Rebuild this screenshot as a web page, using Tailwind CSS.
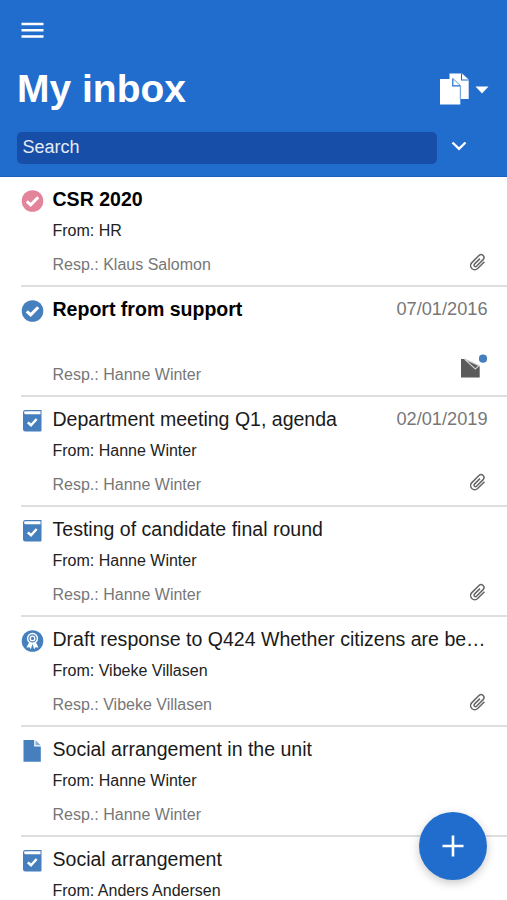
<!DOCTYPE html>
<html lang="en">
<head>
<meta charset="utf-8">
<title>My inbox</title>
<script src="https://cdn.jsdelivr.net/npm/@tailwindcss/browser@4"></script>
</head>
<body class="relative h-[900px] w-[507px] overflow-hidden bg-white font-['Liberation_Sans',Arial,sans-serif] text-black">
<svg class="hidden">
  <symbol id="task" viewBox="0 0 22 22"><circle cx="11" cy="11" r="10.8" fill="currentColor"/><path d="M5.3 11.3 9.200 14.900l7.500-7.700" fill="none" stroke="#fff" stroke-width="3"/></symbol>
  <symbol id="book" viewBox="0 0 22 22"><path d="M3.500 0H20v20.500a1 1 0 0 1-1 1H4a2.500 2.500 0 0 1-2.500-2.500V2.200A2.200 2.200 0 0 1 3.500 0Z" fill="currentColor"/><path d="M4 1.300h15v2.900H4a1.450 1.450 0 0 1 0-2.900Z" fill="#fff"/><path d="m6.300 12.400 3.200 2.900 5.700-6.300" fill="none" stroke="#fff" stroke-width="2.500"/></symbol>
  <symbol id="award" viewBox="0 0 22 22"><circle cx="11" cy="11" r="10.800" fill="currentColor"/><path d="m8 11.500-3 6.100 2.900-.3 1.500 2L11 14l1.600 5.300 1.500-2 2.900.3-3-6.100Z" fill="#fff"/><circle cx="11" cy="8.400" r="4.900" fill="currentColor" stroke="#fff" stroke-width="1.400"/><circle cx="11" cy="8.400" r="2.300" fill="none" stroke="#fff" stroke-width="1.300"/></symbol>
  <symbol id="doc" viewBox="0 0 22 22"><path d="M2 0h10.700v6.500h6.600v15.200H2Z" fill="currentColor"/><path d="m14 .3 5.200 5H14Z" fill="currentColor" opacity=".65"/></symbol>
  <symbol id="clip" viewBox="0 0 18 20"><path transform="translate(8 10.300) rotate(45)" d="M4.100-5V4.600a4.100 4.100 0 0 1-8.200 0V-5.500a2.900 2.900 0 0 1 5.800 0V3.800a1.450 1.450 0 0 1-2.900 0V-4" fill="none" stroke="currentColor" stroke-width="1.500"/></symbol>
</svg>

<header class="flex h-[177px] flex-col border-b border-[#1b60c0] bg-[#206dce] text-white">
  <div class="flex h-[60px] items-center pl-[21px]">
    <svg class="h-[18px] w-[23px]" viewBox="0 0 23 18"><path d="M.5 3h22M.5 9.300h22M.5 15.500h22" stroke="currentColor" stroke-width="2.400"/></svg>
  </div>
  <div class="flex h-[60px] items-center justify-between pr-[18px] pl-[17px]">
    <h1 class="pb-[2px] text-[39px] leading-[58px] font-bold">My inbox</h1>
    <div class="flex items-center gap-[5px]">
      <svg class="mb-[2px] h-[32px] w-[30px]" viewBox="0 0 30 32"><path d="M9.500.500H22l6.700 6V26H9.500Z" fill="#fff"/><path d="M21.500.500v6.500h7.200" fill="none" stroke="#206dce" stroke-width="1.100"/><path d="M0 6h13l7.300 6.500V31.500H0Z" fill="#fff"/><path d="M12.800 5.500v7.300h7.500" fill="none" stroke="#206dce" stroke-width="1.200"/><path d="m12.800 5.500 7.500 7V26" fill="none" stroke="#5b95dc" stroke-width="1"/></svg>
      <svg class="h-[8px] w-[14px]" viewBox="0 0 14 8"><path d="M.5.500h13L7 7.500Z" fill="#fff"/></svg>
    </div>
  </div>
  <div class="flex items-center gap-[14px] pt-[11.500px] pl-[17px]">
    <div class="flex h-[32px] w-[420px] items-center rounded-[5px] bg-[#174ea8] pl-[5.500px] text-[18px] text-[#e4ebf6]">Search</div>
    <svg class="mb-[3px] h-[12px] w-[16px]" viewBox="0 0 16 12"><path d="m1.500 2.500 6.500 6.300 6.500-6.300" fill="none" stroke="#fff" stroke-width="2.400"/></svg>
  </div>
</header>

<main class="pl-[21px]">
  <article class="flex h-[110px] border-b-2 border-[#dedede] pt-[9px]">
    <svg class="mt-[4px] h-[22px] w-[23px] text-[#e3849a]"><use href="#task"/></svg>
    <div class="ml-[8.500px] w-[435px]">
      <div class="flex h-[28px] items-center justify-between"><h2 class="pb-[1px] text-[19.550px] font-bold">CSR 2020</h2></div>
      <p class="h-[33px] text-[16px] leading-[33px] text-[#222]">From: HR</p>
      <div class="flex h-[36px] items-center justify-between text-[#777]"><p class="text-[16px]">Resp.: Klaus Salomon</p><svg class="mb-[7px] h-[20px] w-[18px] text-[#666]"><use href="#clip"/></svg></div>
    </div>
  </article>
  <article class="flex h-[110px] border-b-2 border-[#dedede] pt-[9px]">
    <svg class="mt-[4px] h-[22px] w-[23px] text-[#457fbd]"><use href="#task"/></svg>
    <div class="ml-[8.500px] w-[435px]">
      <div class="flex h-[28px] items-center justify-between"><h2 class="pb-[1px] text-[19.550px] font-bold">Report from support</h2><time class="text-[18.200px] text-[#777]">07/01/2016</time></div>
      <p class="h-[33px]"></p>
      <div class="flex h-[36px] items-center justify-between text-[#777]"><p class="text-[16px]">Resp.: Hanne Winter</p><svg class="mb-[19px] h-[24px] w-[27px]" viewBox="0 0 27 24"><path d="M0 5h4l14.700 7.500v11H0Z" fill="#5b5b5b"/><path d="m3.500 5 10.800 10 3.700-3.300Z" fill="#5b5b5b" stroke="#d0d0d0" stroke-width="1.100"/><circle cx="22" cy="4.700" r="4.100" fill="#457fbd"/></svg></div>
    </div>
  </article>
  <article class="flex h-[110px] border-b-2 border-[#dedede] pt-[9px]">
    <svg class="mt-[4px] h-[22px] w-[23px] text-[#457fbd]"><use href="#book"/></svg>
    <div class="ml-[8.500px] w-[435px]">
      <div class="flex h-[28px] items-center justify-between"><h2 class="pb-[1px] text-[19.550px] text-[#1a1a1a]">Department meeting Q1, agenda</h2><time class="text-[18.200px] text-[#777]">02/01/2019</time></div>
      <p class="h-[33px] text-[16px] leading-[33px] text-[#222]">From: Hanne Winter</p>
      <div class="flex h-[36px] items-center justify-between text-[#777]"><p class="text-[16px]">Resp.: Hanne Winter</p><svg class="mb-[7px] h-[20px] w-[18px] text-[#666]"><use href="#clip"/></svg></div>
    </div>
  </article>
  <article class="flex h-[110px] border-b-2 border-[#dedede] pt-[9px]">
    <svg class="mt-[4px] h-[22px] w-[23px] text-[#457fbd]"><use href="#book"/></svg>
    <div class="ml-[8.500px] w-[435px]">
      <div class="flex h-[28px] items-center"><h2 class="pb-[1px] text-[19.550px] text-[#1a1a1a]">Testing of candidate final round</h2></div>
      <p class="h-[33px] text-[16px] leading-[33px] text-[#222]">From: Hanne Winter</p>
      <div class="flex h-[36px] items-center justify-between text-[#777]"><p class="text-[16px]">Resp.: Hanne Winter</p><svg class="mb-[7px] h-[20px] w-[18px] text-[#666]"><use href="#clip"/></svg></div>
    </div>
  </article>
  <article class="flex h-[110px] border-b-2 border-[#dedede] pt-[9px]">
    <svg class="mt-[4px] h-[22px] w-[23px] text-[#457fbd]"><use href="#award"/></svg>
    <div class="ml-[8.500px] w-[435px]">
      <div class="flex h-[28px] items-center"><h2 class="pb-[1px] text-[19.550px] whitespace-nowrap text-[#1a1a1a]">Draft response to Q424 Whether citizens are be…</h2></div>
      <p class="h-[33px] text-[16px] leading-[33px] text-[#222]">From: Vibeke Villasen</p>
      <div class="flex h-[36px] items-center justify-between text-[#777]"><p class="text-[16px]">Resp.: Vibeke Villasen</p><svg class="mb-[7px] h-[20px] w-[18px] text-[#666]"><use href="#clip"/></svg></div>
    </div>
  </article>
  <article class="flex h-[110px] border-b-2 border-[#dedede] pt-[9px]">
    <svg class="mt-[4px] h-[22px] w-[23px] text-[#457fbd]"><use href="#doc"/></svg>
    <div class="ml-[8.500px] w-[435px]">
      <div class="flex h-[28px] items-center"><h2 class="pb-[1px] text-[19.550px] text-[#1a1a1a]">Social arrangement in the unit</h2></div>
      <p class="h-[33px] text-[16px] leading-[33px] text-[#222]">From: Hanne Winter</p>
      <div class="flex h-[36px] items-center text-[#777]"><p class="text-[16px]">Resp.: Hanne Winter</p></div>
    </div>
  </article>
  <article class="flex h-[63px] pt-[9px]">
    <svg class="mt-[4px] h-[22px] w-[23px] text-[#457fbd]"><use href="#book"/></svg>
    <div class="ml-[8.500px] w-[435px]">
      <div class="flex h-[28px] items-center"><h2 class="pb-[1px] text-[19.550px] text-[#1a1a1a]">Social arrangement</h2></div>
      <p class="text-[16px] leading-[33px] text-[#222]">From: Anders Andersen</p>
    </div>
  </article>
</main>

<button aria-label="Add" class="absolute top-[812px] left-[419px] flex h-[68px] w-[68px] items-center justify-center rounded-full bg-[#206dce] shadow-[0_3px_10px_rgba(0,0,0,0.22)]">
  <svg class="h-[22px] w-[22px]" viewBox="0 0 22 22"><path d="M.500 11h21M11 .500v21" stroke="#fff" stroke-width="2.600"/></svg>
</button>
</body>
</html>
